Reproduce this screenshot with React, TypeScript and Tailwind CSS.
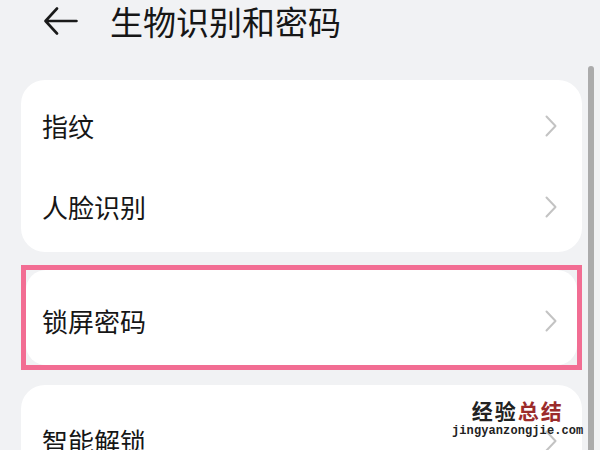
const Chevron = () => (
  <svg width="12" height="22" viewBox="0 0 12 22" fill="none">
    <path
      d="M1.5 1.5 L10.5 11 L1.5 20.5"
      stroke="#c3c3c3"
      strokeWidth="2"
      strokeLinecap="round"
      strokeLinejoin="round"
    />
  </svg>
);

const BackArrow = () => (
  <svg width="34" height="30" viewBox="0 0 34 30" fill="none">
    <path
      d="M32.5 15 H2 M13 2.5 L1.5 15 L13 27.5"
      stroke="#1a1a1a"
      strokeWidth="2.6"
      strokeLinecap="round"
      strokeLinejoin="round"
    />
  </svg>
);

interface iRow {
  label: string;
}

const Row = ({ label }: iRow) => (
  <div className="flex h-[81px] items-center justify-between pl-[21px] pr-[25px]">
    <span className="text-[26px] leading-[34px] text-[#161616]">{label}</span>
    <Chevron />
  </div>
);

export default function App() {
  return (
    <div className="relative flex h-[450px] w-[600px] flex-col overflow-hidden bg-[#f1f2f4] font-['Noto_Sans_CJK_SC',sans-serif]">
      <header className="flex h-[42px] shrink-0 items-center pl-[44px]">
        <BackArrow />
        <h1 className="ml-[32px] text-[33px] leading-[42px] text-[#161616]">生物识别和密码</h1>
      </header>

      <div className="mt-[24px] flex min-h-0 flex-1 pl-[21px]">
        <div className="w-[561px] shrink-0 pt-[14px]">
          <div className="rounded-[24px] bg-white py-[5px]">
            <Row label="指纹" />
            <Row label="人脸识别" />
          </div>

          <div className="mt-[13px] h-[105px] border-[5px] border-[#f26d93]">
            <div className="flex h-full items-center justify-between rounded-[20px] bg-white pl-[16px] pr-[20px] pt-[6px]">
              <span className="text-[26px] leading-[34px] text-[#161616]">锁屏密码</span>
              <Chevron />
            </div>
          </div>

          <div className="mt-[15px] h-[100px] rounded-t-[24px] bg-white pt-[15px]">
            <Row label="智能解锁" />
          </div>
        </div>
        <div className="ml-[6px] w-[6px] shrink-0 rounded-t-full bg-[#ababab]" />
      </div>

      <div className="absolute left-[452px] top-[400px] flex flex-col items-center">
        <div className="text-[21px] font-bold leading-none tracking-[2px]">
          <span className="text-[#222222]">经验</span>
          <span className="text-[#9b2b2b]">总结</span>
        </div>
        <div className="mt-[4px] font-['Liberation_Mono',monospace] text-[12px] font-bold leading-none tracking-[0.1px] text-[#222222]">
          jingyanzongjie.com
        </div>
      </div>
    </div>
  );
}
